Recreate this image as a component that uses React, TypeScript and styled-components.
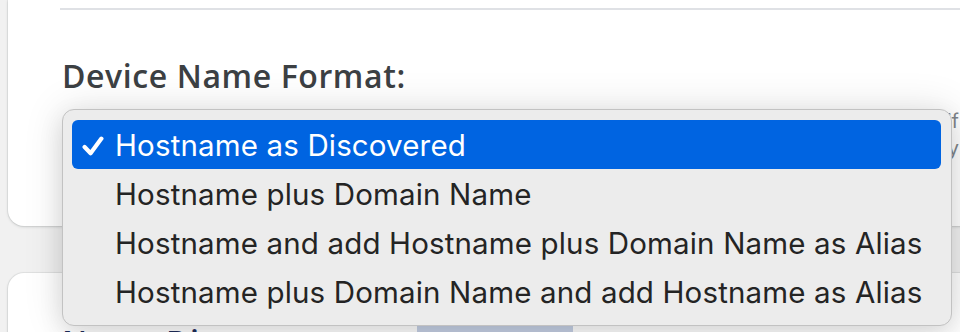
import React from "react";
import styled, { createGlobalStyle } from "styled-components";

const Global = createGlobalStyle`
  html, body { margin: 0; padding: 0; background: #f1f1f1; overflow: hidden; }
  body { width: 960px; height: 332px; font-family: Inter, "Liberation Sans", sans-serif; }
`;

const Page = styled.div`
  position: relative;
  width: 960px;
  height: 332px;
  overflow: hidden;
  box-sizing: border-box;
  padding-left: 8px;
  display: flex;
  flex-direction: column;
  gap: 47px;
`;

const Card = styled.section<{ $first?: boolean }>`
  flex-shrink: 0;
  width: 1000px;
  box-sizing: border-box;
  background: #ffffff;
  border-radius: ${(p) => (p.$first ? "0 0 16px 16px" : "16px 16px 0 0")};
  box-shadow: 0 1px 3px rgba(60, 64, 67, 0.18), 0 0 0 1px rgba(60, 64, 67, 0.07);
  padding-left: 52px;
  height: ${(p) => (p.$first ? "226px" : "120px")};
  padding-top: ${(p) => (p.$first ? "8px" : "51px")};
`;

const Divider = styled.hr`
  margin: 0;
  border: 0;
  height: 2px;
  background: #dfe1e5;
`;

const Heading = styled.h2<{ $navy?: boolean }>`
  margin: ${(p) => (p.$navy ? "0" : "48px 0 0 2px")};
  font-family: "Open Sans", Inter, "Liberation Sans", sans-serif;
  font-size: 32px;
  line-height: 36px;
  font-weight: 600;
  letter-spacing: 0.6px;
  color: ${(p) => (p.$navy ? "#1f2d5c" : "#3c4043")};
`;

const Description = styled.p`
  margin: 14px 0 0;
  padding-right: 49px;
  text-align: right;
  font-size: 20px;
  line-height: 27px;
  color: #80868b;
  white-space: nowrap;
`;

const Row = styled.div`
  display: grid;
  grid-template-columns: 355px 156px;
  align-items: start;
  padding-left: 2px;
`;

const Chip = styled.div`
  height: 40px;
  margin-top: -2px;
  background: #c6d1e6;
  border-radius: 4px;
`;

const Menu = styled.ul`
  position: absolute;
  left: 62px;
  top: 109px;
  width: 890px;
  margin: 0;
  box-sizing: border-box;
  list-style: none;
  padding: 10px 10px 9px 9px;
  background: #ececec;
  border: 1px solid #c2c2c2;
  border-radius: 12px;
  box-shadow: 0 0 40px rgba(0, 0, 0, 0.12), 0 8px 24px rgba(0, 0, 0, 0.1);
`;

const Item = styled.li<{ $selected?: boolean }>`
  position: relative;
  height: 49px;
  display: flex;
  align-items: center;
  padding-left: 43px;
  border-radius: 6px;
  font-family: Inter, "Liberation Sans", sans-serif;
  font-size: 29.5px;
  letter-spacing: 0.15px;
  color: ${(p) => (p.$selected ? "#ffffff" : "#242424")};
  background: ${(p) => (p.$selected ? "#0064e1" : "transparent")};
  white-space: nowrap;
`;

const Check = styled.svg`
  position: absolute;
  left: 10px;
  top: 16px;
  width: 22px;
  height: 20px;
`;

const options = [
  "Hostname as Discovered",
  "Hostname plus Domain Name",
  "Hostname and add Hostname plus Domain Name as Alias",
  "Hostname plus Domain Name and add Hostname as Alias",
];

export default function App() {
  return (
    <>
      <Global />
      <Page>
        <Card $first>
          <Divider />
          <Heading>Device Name Format:</Heading>
          <Description>
            Choose how the name of each device is formatted when it is stored, and if
            <br />
            an alias is also created for devices found by
          </Description>
        </Card>
        <Card>
          <Row>
            <Heading $navy>Name Discovery:</Heading>
            <Chip />
          </Row>
        </Card>
        <Menu>
          {options.map((o, i) => (
            <Item key={o} $selected={i === 0}>
              {i === 0 && (
                <Check viewBox="0 0 22 20" fill="none">
                  <path
                    d="M2.6 11 L8.6 17.2 L19.4 2.6"
                    stroke="#ffffff"
                    strokeWidth="4.2"
                    strokeLinecap="round"
                    strokeLinejoin="round"
                  />
                </Check>
              )}
              {o}
            </Item>
          ))}
        </Menu>
      </Page>
    </>
  );
}
